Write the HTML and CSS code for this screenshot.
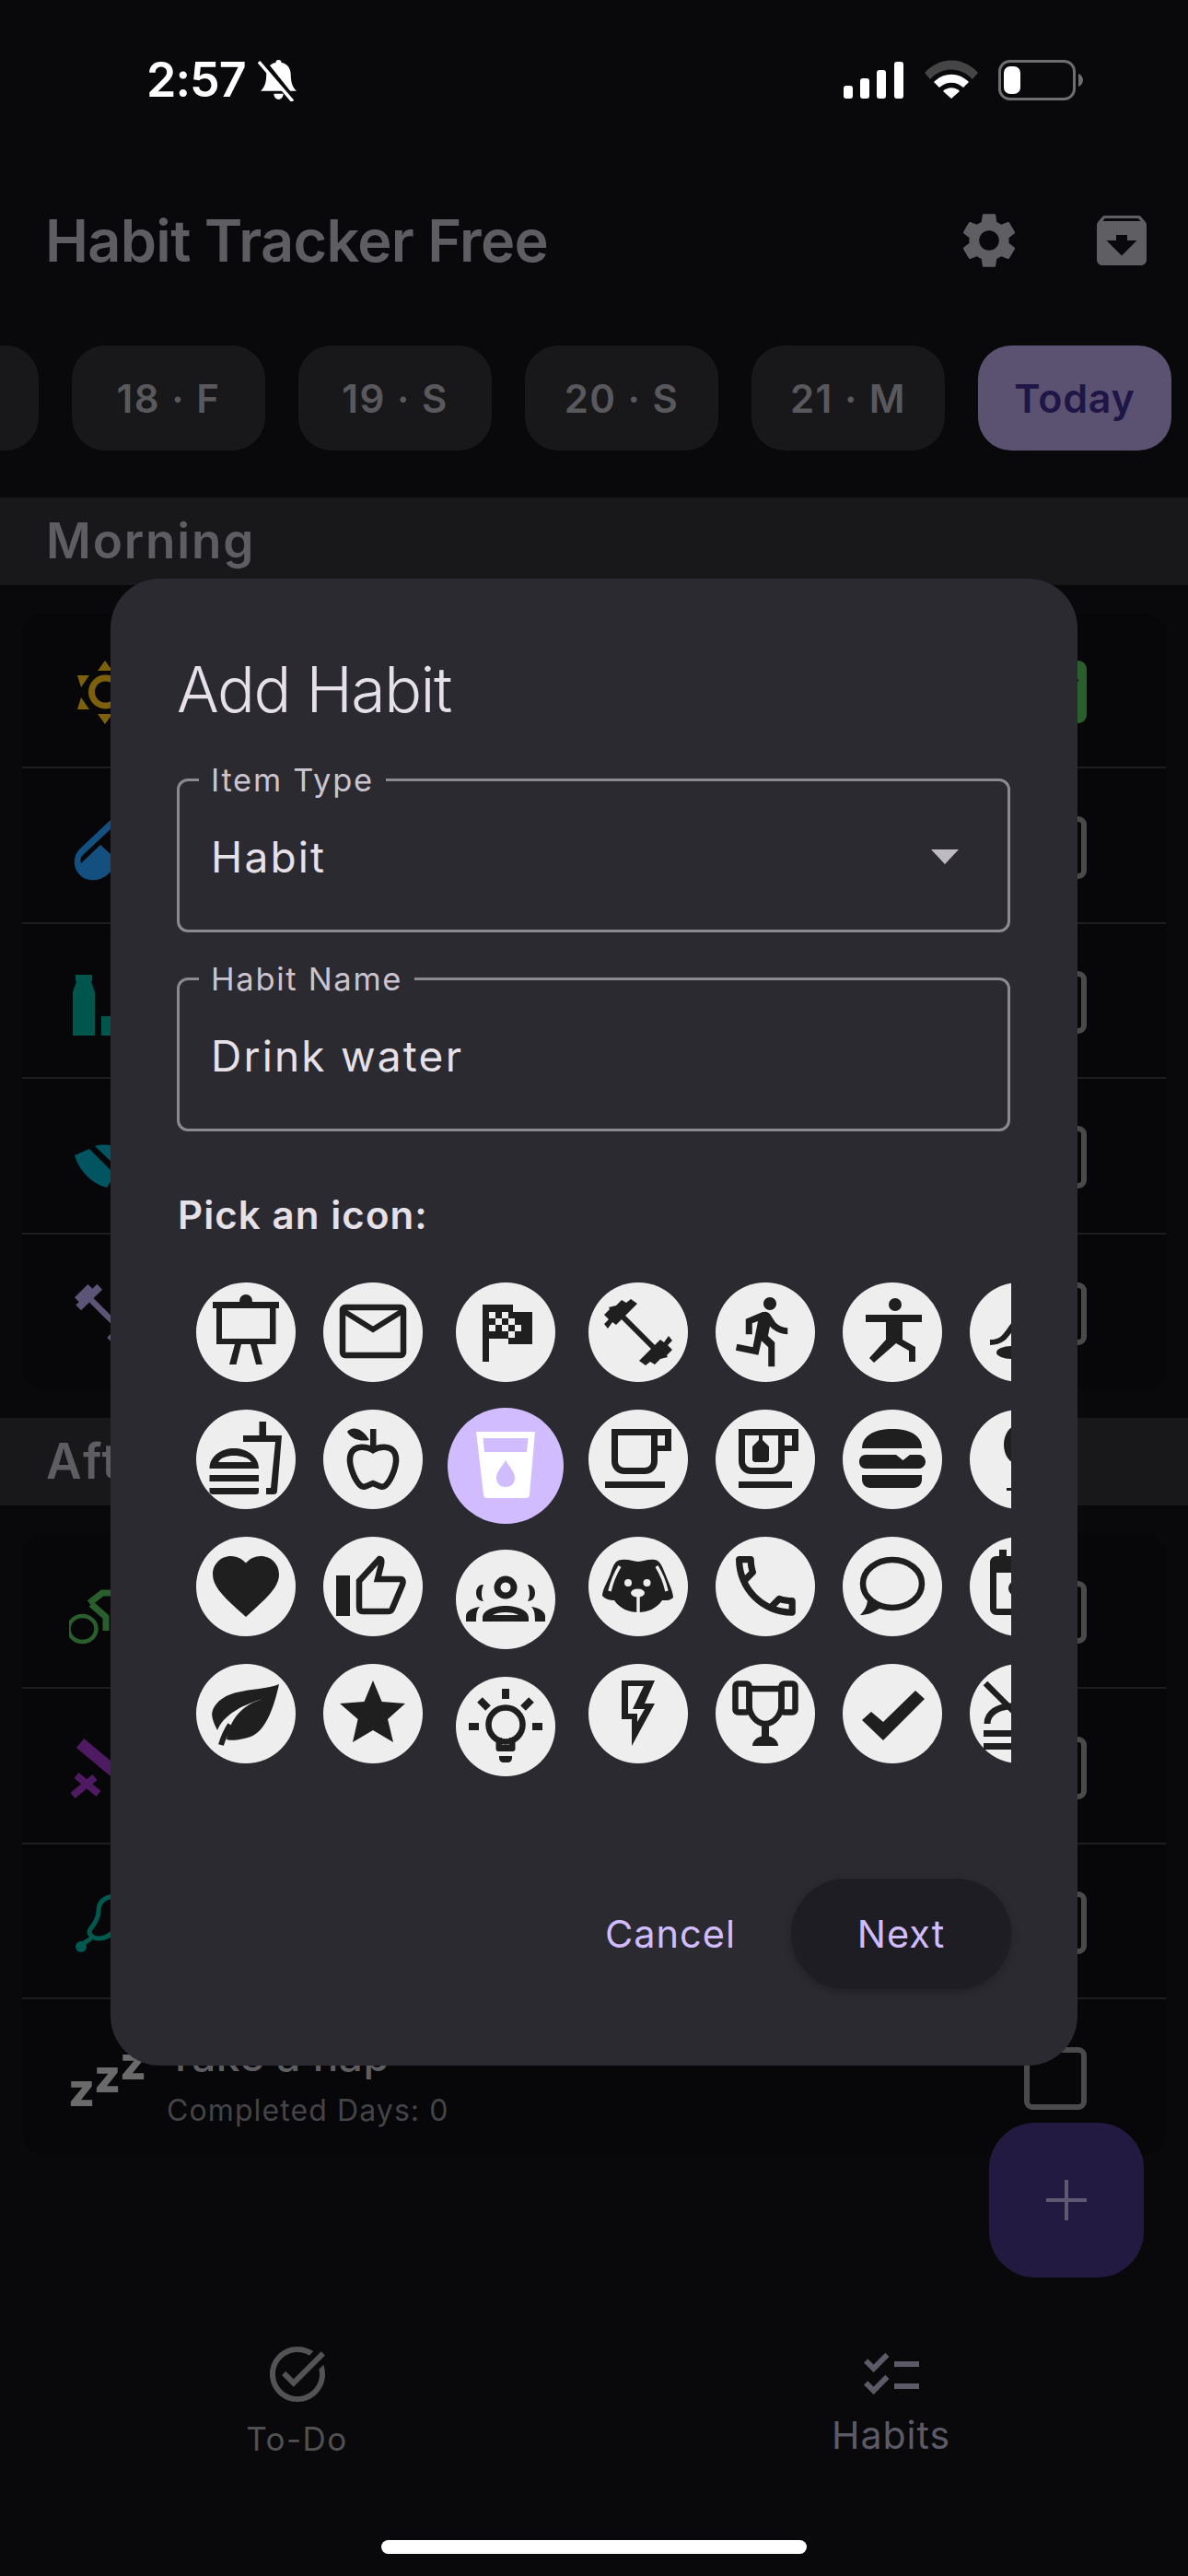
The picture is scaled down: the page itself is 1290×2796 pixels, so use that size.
FILE: index.html
```html
<!DOCTYPE html>
<html lang="en">
<head>
<meta charset="utf-8">
<title>Habit Tracker Free</title>
<link rel="stylesheet" href="styles.css">
</head>
<body>
<div class="page">
  <header class="status">
    <div class="status-left">
      <span class="time">2:57</span>
      <svg class="bell" viewBox="0 0 45 45"><path class="w" d="M22 1c2 0 3 1 3 3 7 1 10 7 10 13 0 8 2 13 6 17H3c4-4 6-9 6-17 0-6 3-12 10-13 0-2 1-3 3-3z"/><path class="w" d="M17 37h10c0 3-2 6-5 6s-5-3-5-6z"/><path class="cut" d="M4 0l36 45"/><path class="slash" d="M1 3l36 42"/></svg>
    </div>
    <div class="status-right">
      <svg class="signal" viewBox="0 0 65 40"><rect class="w" x="0" y="26" width="10" height="14" rx="3"/><rect class="w" x="18" y="18" width="10" height="22" rx="3"/><rect class="w" x="36" y="9" width="10" height="31" rx="3"/><rect class="w" x="55" y="0" width="10" height="40" rx="3"/></svg>
      <svg class="wifi" viewBox="0 0 58 42"><path class="dimw" d="M0 14C16-4 42-4 58 14l-6 7C39 7 19 7 6 21z"/><path class="w" d="M10 24c11-11 27-11 38 0l-6 6c-8-7-18-7-26 0z"/><path class="w" d="M20 34c5-5 13-5 18 0l-9 8z"/></svg>
      <svg class="battery" viewBox="0 0 92 44"><rect class="bat-frame" x="1.5" y="1.5" width="81" height="41" rx="11"/><rect class="w" x="6" y="7" width="18" height="30" rx="7"/><path class="bat-nub" d="M87 15c3 1 5 4 5 7s-2 6-5 7z"/></svg>
    </div>
  </header>

  <section class="appbar">
    <h1 class="app-title">Habit Tracker Free</h1>
    <div class="app-actions">
      <svg class="app-icon" viewBox="0 0 24 24"><path d="M19.14 12.94c.04-.3.06-.61.06-.94 0-.32-.02-.64-.07-.94l2.03-1.58c.18-.14.23-.41.12-.61l-1.92-3.32c-.12-.22-.37-.29-.59-.22l-2.39.96c-.5-.38-1.03-.7-1.62-.94l-.36-2.54c-.04-.24-.24-.41-.48-.41h-3.84c-.24 0-.43.17-.47.41l-.36 2.54c-.59.24-1.13.57-1.62.94l-2.39-.96c-.22-.08-.47 0-.59.22L2.74 8.87c-.12.21-.08.47.12.61l2.03 1.58c-.05.3-.09.63-.09.94s.02.64.07.94l-2.03 1.58c-.18.14-.23.41-.12.61l1.92 3.32c.12.22.37.29.59.22l2.39-.96c.5.38 1.03.7 1.62.94l.36 2.54c.05.24.24.41.48.41h3.84c.24 0 .44-.17.47-.41l.36-2.54c.59-.24 1.13-.56 1.62-.94l2.39.96c.22.08.47 0 .59-.22l1.92-3.32c.12-.22.07-.47-.12-.61l-2.01-1.58zM12 15.6c-1.98 0-3.6-1.62-3.6-3.6s1.62-3.6 3.6-3.6 3.6 1.62 3.6 3.6-1.62 3.6-3.6 3.6z"/></svg>
      <svg class="app-icon" viewBox="0 0 24 24"><path d="M20.54 5.23l-1.39-1.68C18.88 3.21 18.47 3 18 3H6c-.47 0-.88.21-1.16.55L3.46 5.23C3.17 5.57 3 6.02 3 6.5V19c0 1.1.9 2 2 2h14c1.1 0 2-.9 2-2V6.5c0-.48-.17-.93-.46-1.27zM12 17.5L6.5 12H10v-2h4v2h3.5L12 17.5zM5.12 5l.81-1h12l.94 1H5.12z"/></svg>
    </div>
  </section>

  <nav class="chips">
    <span class="chip"></span>
    <span class="chip">18 · F</span>
    <span class="chip">19 · S</span>
    <span class="chip">20 · S</span>
    <span class="chip">21 · M</span>
    <span class="chip chip-today">Today</span>
  </nav>

  <h2 class="section section-morning">Morning</h2>
  <div class="card">
    <div class="row">
      <svg class="row-icon gold" viewBox="0 0 78 78"><circle class="sun-ring" cx="39.500" cy="39" r="15"/><path d="M39 5l8 11H31zM39 74l-8-11h16zM9 21h13l-9 13zM9 58h13l-9-13zM70 21H57l9 13zM70 58H57l9-13z"/></svg>
      <span class="check check-on"><svg class="tick" viewBox="0 0 68 68"><path d="M12 34l15 15 30-30"/></svg></span>
    </div>
    <div class="row">
      <svg class="row-icon blue" viewBox="0 0 78 78"><path fill-rule="evenodd" d="M45 9L12 40C3 49 4 62 13 70c9 7 21 5 29-2l30-26V9zM45 19L15 47c-3 3-3 6-2 9l21-20 20 18 14-14V19z"/></svg>
      <span class="check"></span>
    </div>
    <div class="row">
      <svg class="row-icon teal" viewBox="0 0 78 78"><path d="M7 9h18v7h-1l4 12v47H4V28l4-12H7zM35 54h20c0 14-6 21-12 21h-8z"/></svg>
      <span class="check"></span>
    </div>
    <div class="row">
      <svg class="row-icon cyan" viewBox="0 0 78 78"><path d="M6 37l16-7 28 28-9 14C24 68 10 52 6 37zM28 27c5-2 12-2 22 0v21z"/></svg>
      <span class="check"></span>
    </div>
    <div class="row">
      <svg class="row-icon lilac" viewBox="0 0 108 108"><g transform="translate(-14 -14) scale(1.25)"><path class="barbell" d="M30 30L78 78"/><path class="barbell-plate" d="M22.5 47L48 22M21 38L37 22M85.5 61L60 86M87 70L71 86"/></g></svg>
      <span class="check"></span>
    </div>
  </div>

  <h2 class="section section-afternoon">Afternoon</h2>
  <div class="card">
    <div class="row">
      <svg class="row-icon green" viewBox="0 0 78 78"><ellipse class="ln-4" cx="14.5" cy="57" rx="15" ry="14"/><path class="ln-7" d="M22 29l14-11h12M24 30l16 14v15"/></svg>
      <span class="check"></span>
    </div>
    <div class="row">
      <svg class="row-icon violet" viewBox="0 0 78 78"><path class="ln-10" d="M12 12l48 40"/><path class="ln-8" d="M4 69l24-20M8 47l24 20"/></svg>
      <span class="check"></span>
    </div>
    <div class="row">
      <svg class="row-icon pine" viewBox="0 0 78 78"><path class="ln-5" d="M48 10C36 12 32 18 32 26c0 8-4 14-9 20-3 5 2 10 9 10 8 0 14-4 18-10M24 56L13 63"/><circle class="solid" cx="13" cy="65" r="6"/></svg>
      <span class="check"></span>
    </div>
    <div class="row">
      <svg class="row-icon zzz" viewBox="0 0 78 78"><text class="z" x="-1" y="69">z</text><text class="z" x="27" y="54">z</text><text class="z" x="55" y="40">z</text></svg>
      <div class="row-text">
        <div class="row-name">Take a nap</div>
        <div class="row-sub">Completed Days: 0</div>
      </div>
      <span class="check"></span>
    </div>
  </div>

  <footer class="bottom-nav">
    <div class="nav-item">
      <svg class="nav-icon todo" viewBox="0 0 24 24"><path d="M22 5.18L10.59 16.6l-4.24-4.24 1.41-1.41 2.83 2.83 10-10L22 5.18zm-2.21 5.04c.13.57.21 1.17.21 1.78 0 4.42-3.58 8-8 8s-8-3.58-8-8 3.58-8 8-8c1.58 0 3.04.46 4.28 1.22l1.44-1.44C16.1 2.67 14.13 2 12 2 6.48 2 2 6.48 2 12s4.48 10 10 10 10-4.48 10-10c0-1.19-.22-2.33-.6-3.39l-1.61 1.61z"/></svg>
      <span class="nav-label">To-Do</span>
    </div>
    <div class="nav-item nav-active">
      <svg class="nav-icon habits" viewBox="0 0 24 24"><path d="M22 7h-9v2h9V7zm0 8h-9v2h9v-2zM5.54 11L2 7.46l1.41-1.41 2.12 2.12 4.24-4.24 1.41 1.41L5.54 11zm0 8L2 15.46l1.41-1.41 2.12 2.12 4.24-4.24 1.41 1.41L5.54 19z"/></svg>
      <span class="nav-label">Habits</span>
    </div>
  </footer>
  <div class="home-bar"></div>

  <button class="fab"><svg class="fab-plus" viewBox="0 0 44 44"><path d="M20 0h4v20h20v4H24v20h-4V24H0v-4h20z"/></svg></button>

  <div class="dialog">
    <h3 class="dialog-title">Add Habit</h3>
    <div class="field">
      <span class="field-label">Item Type</span>
      <span class="field-value">Habit</span>
      <svg class="field-arrow" viewBox="0 0 30 16"><path d="M0 0h30L15 16z"/></svg>
    </div>
    <div class="field field-second">
      <span class="field-label">Habit Name</span>
      <span class="field-value">Drink water</span>
    </div>
    <div class="pick-label">Pick an icon:</div>

    <div class="picker">
      <div class="col">
        <!-- easel -->
        <div class="pic"><svg class="ic" viewBox="0 0 108 108"><circle cx="54" cy="20" r="7"/><path fill-rule="evenodd" d="M18 21h72v7h-3.500v39H66l6 22h-7l-6-22H49l-5.500 22H36l6-22H22V28h-4zM28 28v33h52V28z"/></svg></div>
        <!-- fast food -->
        <div class="pic"><svg class="ic" viewBox="0 0 108 108"><path d="M68.500 13H76v15h17l-5 60c0 3-2 4-4 4h-8v-7h5l5-50H51v-7h17.500z"/><path fill-rule="evenodd" d="M14.500 64C14.500 50 28 42 41 42s27 8 27 22zM24 57h36c-3-5-11-7-19-7s-14 2-17 7z"/><rect x="14.500" y="71" width="53.500" height="7"/><path d="M14.500 85H68v4c0 2-1 3-3 3H18c-2 0-3.500-1-3.500-3z"/></svg></div>
        <!-- heart -->
        <div class="pic"><svg class="ic" viewBox="0 0 108 108"><path transform="translate(10.800 10.200) scale(3.600)" d="M12 21.350l-1.450-1.320C5.400 15.360 2 12.280 2 8.500 2 5.420 4.420 3 7.500 3c1.740 0 3.410.81 4.500 2.090C13.090 3.810 14.760 3 16.500 3 19.580 3 22 5.420 22 8.500c0 3.780-3.400 6.860-8.550 11.540L12 21.350z"/></svg></div>
        <!-- leaf -->
        <div class="pic"><svg class="ic" viewBox="0 0 108 108"><path d="M90 22C78 27 60 27 44 31 26 35 14 48 18 60c1 4 3 8 5 12 5-12 17-24 49-34-26 8-36 26-39 44 7 2 15 0 23-2 18-4 28-30 34-58z"/><path class="st" stroke-width="6" d="M27 88c3-10 6-16 10-22"/></svg></div>
      </div>
      <div class="col">
        <!-- envelope -->
        <div class="pic"><svg class="ic" viewBox="0 0 108 108"><rect class="st" stroke-width="6.500" x="21" y="27" width="66" height="52" rx="3"/><path class="st" stroke-width="6" d="M22 31l32 20 32-20"/></svg></div>
        <!-- apple -->
        <div class="pic"><svg class="ic" viewBox="0 0 108 108"><rect x="51" y="21" width="6.500" height="22"/><path d="M26 24c5-6 16-5 24 9-9 2-20-1-24-9z"/><path class="st" stroke-width="6.500" d="M54 44C48 40 34 38 30 48c-4 10 4 28 10 34 4 4 8 0 14-2 6 2 10 6 14 2 6-6 14-24 10-34-4-10-18-8-24-4z"/></svg></div>
        <!-- thumb -->
        <div class="pic"><svg class="ic" viewBox="0 0 108 108"><rect x="14" y="42" width="15" height="44"/><path class="st" stroke-width="6.500" d="M39 48L61 24c2 0 3 2 2 6l-4 16h25c3 0 3 4 2 6L75 78c-1 3-3 3-5 3H43c-3 0-4-2-4-5z"/></svg></div>
        <!-- star -->
        <div class="pic"><svg class="ic" viewBox="0 0 108 108"><path d="M54 18l9.600 23L89 43 70 60l6 25-22-13-22 13 5.600-25L18 43l26.500-2z"/></svg></div>
      </div>
      <div class="col col-wide">
        <!-- flag -->
        <div class="pic"><svg class="ic" viewBox="0 0 108 108"><path d="M29 24h33v8h21v35H57v-6H36v25h-7z"/><path class="hole" d="M36 32h7v7h-7zM50 32h7v7h-7zM43 39h7v7h-7zM57 39h7v7h-7zM36 46h7v7h-7zM50 46h7v7h-7zM64 46h7v7h-7zM57 53h7v7h-7z"/></svg></div>
        <!-- selected: glass of water -->
        <div class="pic pic-selected"><svg class="ic-selected" viewBox="0 0 126 126"><path class="glass" fill-rule="evenodd" d="M31 26h64l-6 68c0 3-2 4-4 4H43c-2 0-4-1-4-4zM38.600 33l1.400 15h46l1.400-15zM63 57c-3 6-10 12-10 19 0 6 4 10 10 10s10-4 10-10c0-7-7-13-10-19z"/></svg></div>
        <!-- group -->
        <div class="pic"><svg class="ic" viewBox="0 0 108 108"><circle class="st" stroke-width="7" cx="54" cy="41" r="9"/><path d="M29 38c-4 0-7 4-7 9s3 9 8 9c-2-4-2-5-2-9s1-6 2-9z"/><path d="M79 38c4 0 7 4 7 9s-3 9-8 9c2-4 2-5 2-9s-1-6-2-9z"/><path fill-rule="evenodd" d="M29 78v-4c0-8 12-13 25-13s25 5 25 13v4zM40 71h28c-3-2-8-3-14-3s-11 1-14 3z"/><path d="M11 78v-6c0-5 7-9 15-10-3 3-4 7-4 16zM97 78v-6c0-5-7-9-15-10 3 3 4 7 4 16z"/></svg></div>
        <!-- bulb -->
        <div class="pic"><svg class="ic" viewBox="0 0 108 108"><circle class="st" stroke-width="6.500" cx="54" cy="52" r="18.500"/><path fill-rule="evenodd" d="M43.500 66h21v12c0 2-1 3-3 3h-15c-2 0-3-1-3-3zM50 66v8h8v-8z"/><path d="M47 86h14v2c0 3-2 5-5 5h-4c-3 0-5-2-5-5z"/><rect x="50" y="13" width="8" height="11"/><rect x="14" y="50" width="11" height="8"/><rect x="83" y="50" width="11" height="8"/><path class="st" stroke-width="8" d="M26 25l9 9M82 25l-9 9"/></svg></div>
      </div>
      <div class="col">
        <!-- barbell -->
        <div class="pic"><svg class="ic" viewBox="0 0 108 108"><path class="st" stroke-width="6" d="M34 34L78 78"/><path d="M21 50l-4-5 5-5-5-5 6-6-1-2 8-2 6-6 5 3 5-4 7 5-23 23-4-3z"/><path d="M87 58l4 5-5 5 5 5-6 6 1 2-8 2-6 6-5-3-5 4-7-5 23-23 4 3z"/></svg></div>
        <!-- coffee -->
        <div class="pic"><svg class="ic" viewBox="0 0 108 108"><path fill-rule="evenodd" d="M25 21h65v24H75v11c0 8-6 14-14 14H39c-8 0-14-6-14-14zM32 28v28c0 4 3 7 7 7h22c4 0 7-3 7-7V28zM75 28v11h8V28z"/><rect x="18" y="78" width="65" height="7"/></svg></div>
        <!-- dog -->
        <div class="pic"><svg class="ic" viewBox="0 0 108 108"><path d="M54 27c6 0 10-3 18-2 6 1 8 7 12 17 4 10 8 18 8 24-4 4-8 3-12 3-6 9-16 13-26 13s-20-4-26-13c-4 0-10-1-13-5 0-6 5-14 9-24 3-10 6-15 12-15 8-1 12 2 18 2z"/><path class="white-ln" stroke-width="3.500" d="M34 32c-5 8-9 18-11 27M74 32c5 8 9 18 11 27M54 64v18"/><circle class="hole" cx="43" cy="50" r="4"/><circle class="hole" cx="63.500" cy="50" r="4"/><ellipse class="hole" cx="53.500" cy="61" rx="7.500" ry="4.500"/></svg></div>
        <!-- bolt -->
        <div class="pic"><svg class="ic" viewBox="0 0 108 108"><path fill-rule="evenodd" d="M36 18h36L61 43h11L47 89V60H36zM43 24v30h10v9l8-14H48l12-25z"/></svg></div>
      </div>
      <div class="col">
        <!-- runner -->
        <div class="pic"><svg class="ic" viewBox="0 0 108 108"><path transform="translate(11.800 10.800) scale(3.500)" d="M13.490 5.480c1.100 0 2-.9 2-2s-.9-2-2-2-2 .9-2 2 .9 2 2 2zm-3.600 13.900l1-4.400 2.100 2v6h2v-7.500l-2.100-2 .6-3c1.300 1.500 3.300 2.500 5.500 2.500v-2c-1.900 0-3.500-1-4.300-2.400l-1-1.600c-.4-.6-1-1-1.700-1-.3 0-.5.1-.8.1l-5.200 2.200v4.700h2v-3.400l1.800-.7-1.600 8.100-4.900-1-.4 2 7 1.400z"/></svg></div>
        <!-- tea -->
        <div class="pic"><svg class="ic" viewBox="0 0 108 108"><path fill-rule="evenodd" d="M25 21h65v24H75v11c0 8-6 14-14 14H39c-8 0-14-6-14-14zM32 28v28c0 4 3 7 7 7h22c4 0 7-3 7-7V28zM75 28v11h8V28z"/><path d="M47 28h4v5l7 7v15l-2 2H42l-2-2V40l7-7z"/><rect x="25" y="78" width="58" height="7"/></svg></div>
        <!-- phone -->
        <div class="pic"><svg class="ic" viewBox="0 0 108 108"><path transform="translate(11.200 10.200) scale(3.600)" d="M6.540 5c.06.89.21 1.760.45 2.590l-1.200 1.200c-.41-1.200-.67-2.470-.76-3.790h1.510m9.860 12.020c.85.24 1.720.39 2.600.45v1.490c-1.320-.09-2.590-.35-3.800-.75l1.200-1.190M7.500 3H4c-.55 0-1 .45-1 1 0 9.390 7.610 17 17 17 .55 0 1-.45 1-1v-3.490c0-.55-.45-1-1-1-1.240 0-2.450-.2-3.570-.57-.1-.04-.21-.05-.31-.05-.26 0-.51.1-.71.29l-2.200 2.200c-2.830-1.450-5.150-3.760-6.590-6.590l2.200-2.200c.28-.28.36-.67.25-1.020C8.700 6.450 8.500 5.250 8.500 4c0-.55-.45-1-1-1z"/></svg></div>
        <!-- trophy -->
        <div class="pic"><svg class="ic" viewBox="0 0 108 108"><rect class="st" stroke-width="6.500" x="21.500" y="21.500" width="15" height="31" rx="3"/><rect class="st" stroke-width="6.500" x="71.500" y="21.500" width="15" height="31" rx="3"/><path class="st" stroke-width="6.500" d="M36.500 27h35v18c0 10-8 20-17.500 20S36.500 55 36.500 45z"/><rect x="50" y="68" width="8" height="12"/><path d="M40 89c0-6 6-11 14-11s14 5 14 11z"/></svg></div>
      </div>
      <div class="col">
        <!-- yoga -->
        <div class="pic"><svg class="ic" viewBox="0 0 108 108"><circle cx="57" cy="24" r="7"/><path d="M25 35h61v8H65v19l14 8v16h-7V74l-14-8-24 21-5-5 18-20V43H25z"/></svg></div>
        <!-- burger -->
        <div class="pic"><svg class="ic" viewBox="0 0 108 108"><path d="M21 42c0-14 14-21 33-21s32 7 32 21z"/><path d="M25 49h33l7.500 6 7.500-6h10c4 0 7 4 7 7.500S87 64 83 64H25c-4 0-7-3-7-7.500S21 49 25 49z"/><path d="M21 71h65v5c0 5-4 9-9 9H30c-5 0-9-4-9-9z"/></svg></div>
        <!-- speech bubble -->
        <div class="pic"><svg class="ic" viewBox="0 0 108 108"><ellipse class="st" stroke-width="6.500" cx="54" cy="51" rx="32" ry="26"/><path d="M27 68l8 6 8 4-3 0c-8 5-14 7-21 7 4-4 8-10 8-17z"/></svg></div>
        <!-- check -->
        <div class="pic"><svg class="ic" viewBox="0 0 108 108"><path d="M79 29l10 9-45 45-23-22 10-9 13 11z"/></svg></div>
      </div>
      <div class="col">
        <!-- shoe -->
        <div class="pic"><svg class="ic" viewBox="0 0 108 108"><path class="st" stroke-width="6" d="M22 65c12 0 16-5 24-17 8-10 20-12 30-10"/><ellipse cx="46" cy="76" rx="17" ry="7"/></svg></div>
        <!-- globe -->
        <div class="pic"><svg class="ic" viewBox="0 0 108 108"><ellipse cx="52" cy="38" rx="15" ry="21"/><rect x="40" y="85" width="40" height="3"/></svg></div>
        <!-- walkie -->
        <div class="pic"><svg class="ic" viewBox="0 0 108 108"><path fill-rule="evenodd" d="M32 14h8v7h30c4 0 7 3 7 7v50c0 4-3 7-7 7H29c-4 0-7-3-7-7V28c0-4 3-7 7-7h3zM29 39v39h41V39z"/><circle cx="50" cy="56" r="8"/></svg></div>
        <!-- no food -->
        <div class="pic"><svg class="ic" viewBox="0 0 108 108"><path class="st" stroke-width="6.500" d="M17 21l62 62"/><path class="st" stroke-width="7" d="M19 65c0-12 12-19 27-19"/><rect x="15" y="72" width="60" height="7"/><rect x="15" y="86" width="60" height="7"/></svg></div>
      </div>
    </div>

    <div class="actions">
      <span class="btn-cancel">Cancel</span>
      <span class="btn-next">Next</span>
    </div>
  </div>
</div>
</body>
</html>
```
FILE: styles.css
```css
* { box-sizing: border-box; margin: 0; padding: 0; }
html, body { background: #09090c; }
body { font-family: Inter, "Liberation Sans", sans-serif; }
.page { position: relative; width: 1290px; height: 2796px; overflow: hidden; background: #09090c; }

/* status bar */
.status { height: 190px; padding: 62px 114px 0 159px; display: flex; justify-content: space-between; align-items: flex-start; }
.status-left { display: flex; align-items: center; gap: 13px; height: 50px; }
.time { color: #fff; font-size: 52px; font-weight: 600; line-height: 50px; letter-spacing: -1px; }
.bell { width: 46px; height: 46px; }
.w { fill: #fff; }
.dimw { fill: #454545; }
.cut { stroke: #09090c; stroke-width: 5; fill: none; }
.slash { stroke: #fff; stroke-width: 3.500; fill: none; }
.status-right { display: flex; align-items: flex-start; width: 260px; padding-top: 3px; }
.signal { width: 65px; height: 40px; margin-top: 2px; }
.wifi { width: 58px; height: 42px; margin-left: 23px; }
.battery { width: 92px; height: 44px; margin-left: 22px; }
.bat-frame { fill: none; stroke: #6e6e6e; stroke-width: 3; }
.bat-nub { fill: #6e6e6e; }

/* app bar */
.appbar { height: 142px; padding: 0 36px 0 49px; display: flex; justify-content: space-between; align-items: center; }
.app-title { color: #5e5d62; font-size: 63px; font-weight: 600; letter-spacing: -0.7px; }
.app-actions { display: flex; gap: 72px; }
.app-icon { width: 72px; height: 72px; fill: #5f5e63; }

/* date chips */
.chips { margin: 43px 0 0 -168px; display: flex; gap: 36px; }
.chip { flex: none; width: 210px; height: 114px; border-radius: 36px; background: #18181b; color: #59585c; font-size: 42px; font-weight: 600; letter-spacing: 1.500px; display: flex; align-items: center; justify-content: center; }
.chip-today { background: #5a5270; color: #1e1646; font-size: 43px; letter-spacing: 0.8px; }

/* sections */
.section { height: 95px; padding-left: 50px; background: #18181b; color: #5e5d62; font-size: 53px; font-weight: 600; letter-spacing: 1.800px; line-height: 95px; }
.section-morning { margin-top: 51px; }
.section-afternoon { margin-top: 31px; }
.card { margin: 31px 24px 0; background: #070709; border-radius: 24px; }
.row { height: 168.400px; padding: 4px 86px 0 51px; display: flex; align-items: center; border-bottom: 2px solid #1e1e21; position: relative; }
.row:last-child { border-bottom: 0; }
.row-icon { flex: none; width: 78px; height: 78px; }
.check { margin-left: auto; flex: none; width: 68px; height: 68px; border: 6px solid #4a4a4a; border-radius: 9px; }
.check-on { background: #2a5e2c; border: 0; }
.tick { display: block; width: 68px; height: 68px; fill: none; stroke: #0a0a0c; stroke-width: 7; }
.gold { fill: #7d600c; }
.sun-ring { fill: none; stroke: #7d600c; stroke-width: 7; }
.blue { fill: #14507f; }
.teal { fill: #00564c; }
.cyan { fill: #005560; }
.lilac { fill: none; }
.barbell { fill: none; stroke: #5d5577; stroke-width: 7; }
.barbell-plate { fill: none; stroke: #5d5577; stroke-width: 9; }
.green { fill: none; stroke: #2a5e2c; }
.ln-4 { fill: none; stroke-width: 4.500; }
.ln-7 { fill: none; stroke-width: 7; }
.violet { fill: none; stroke: #4e1a62; }
.ln-10 { stroke-width: 13; }
.ln-8 { stroke-width: 8; }
.pine { fill: none; stroke: #00594f; }
.ln-5 { stroke-width: 5; }
.solid { fill: #00594f; stroke: none; }
.zzz { overflow: visible; }
.z { fill: #6a6a6a; font-family: Inter, sans-serif; font-size: 50px; font-weight: 800; }
.row-text { margin: 4px 0 0 28px; display: flex; flex-direction: column; gap: 15px; }
.row-name { color: #5e5d62; font-size: 46px; font-weight: 500; line-height: 50px; letter-spacing: 0.5px; }
.row-sub { color: #444448; font-size: 32px; line-height: 40px; letter-spacing: 1.100px; }

/* bottom nav */
.bottom-nav { margin-top: 202px; display: flex; height: 140px; }
.nav-item { flex: 1; display: flex; flex-direction: column; align-items: center; }
.nav-icon { width: 72px; height: 72px; }
.todo { fill: #535353; }
.habits { fill: #5c5a66; margin-top: 1px; }
.nav-label { color: #505050; font-size: 35px; line-height: 44px; letter-spacing: 1.500px; margin-top: 12px; }
.nav-active .nav-label { color: #5c5a66; font-size: 41px; line-height: 50px; margin-top: 4px; letter-spacing: 1px; }
.home-bar { width: 462px; height: 15px; margin: 76px auto 0; border-radius: 8px; background: #fff; }

/* floating action */
.fab { position: absolute; left: 1074px; top: 2304px; width: 168px; height: 168px; border: 0; border-radius: 50px; background: #221a40; display: flex; align-items: center; justify-content: center; }
.fab-plus { width: 44px; height: 44px; fill: #5e5871; }

/* dialog */
.dialog { position: absolute; left: 120px; top: 628px; width: 1050px; height: 1614px; padding: 72px 72px 0; background: #2b2a31; border-radius: 54px; color: #e6e0e9; }
.dialog-title { font-size: 68px; font-weight: 300; line-height: 96px; letter-spacing: -1.500px; color: #e6e0e9; }
.field { position: relative; margin-top: 49px; height: 167px; width: 905px; border: 3px solid #8b8a90; border-radius: 12px; display: flex; align-items: center; padding: 0 34px 0; }
.field-second { margin-top: 49px; }
.field-label { position: absolute; left: 21px; top: -19px; padding: 0 13px; background: #2b2a31; color: #cac4d0; font-size: 34.500px; line-height: 36px; letter-spacing: 1.700px; }
.field-value { font-size: 46px; letter-spacing: 2.200px; color: #e6e0e9; margin-top: 2px; }
.field-arrow { position: absolute; right: 53px; top: 74px; width: 30px; height: 16px; fill: #bdbbc0; }
.pick-label { margin-top: 64px; padding-left: 1px; font-size: 42px; font-weight: 600; line-height: 54px; letter-spacing: 1.100px; color: #e6e0e9; }

/* icon picker */
.picker { margin-top: 46px; width: 906px; padding-left: 6px; display: flex; overflow: hidden; }
.col { flex: none; width: 108px; margin: 0 15px; display: flex; flex-direction: column; align-items: center; gap: 30px; }
.col-wide { width: 126px; margin: 0 12px; }
.pic { flex: none; width: 108px; height: 108px; border-radius: 50%; background: #eeeeee; }
.pic-selected { width: 126px; height: 126px; margin: -2px 0; background: #d0bcff; }
.ic { display: block; width: 108px; height: 108px; fill: #1f1f1f; }
.ic-selected { display: block; width: 126px; height: 126px; }
.glass { fill: #fff; }
.st { fill: none; stroke: #1f1f1f; }
.hole { fill: #eeeeee; }
.white-ln { fill: none; stroke: #eeeeee; }

/* actions */
.actions { margin-top: 111px; display: flex; justify-content: flex-end; align-items: center; gap: 60px; color: #d0bcff; font-size: 41.500px; font-weight: 400; letter-spacing: 1px; }
.btn-next { width: 239px; height: 120px; border-radius: 60px; background: #1f1d24; display: flex; align-items: center; justify-content: center; box-shadow: 0 3px 8px rgba(0,0,0,0.25); }
```
